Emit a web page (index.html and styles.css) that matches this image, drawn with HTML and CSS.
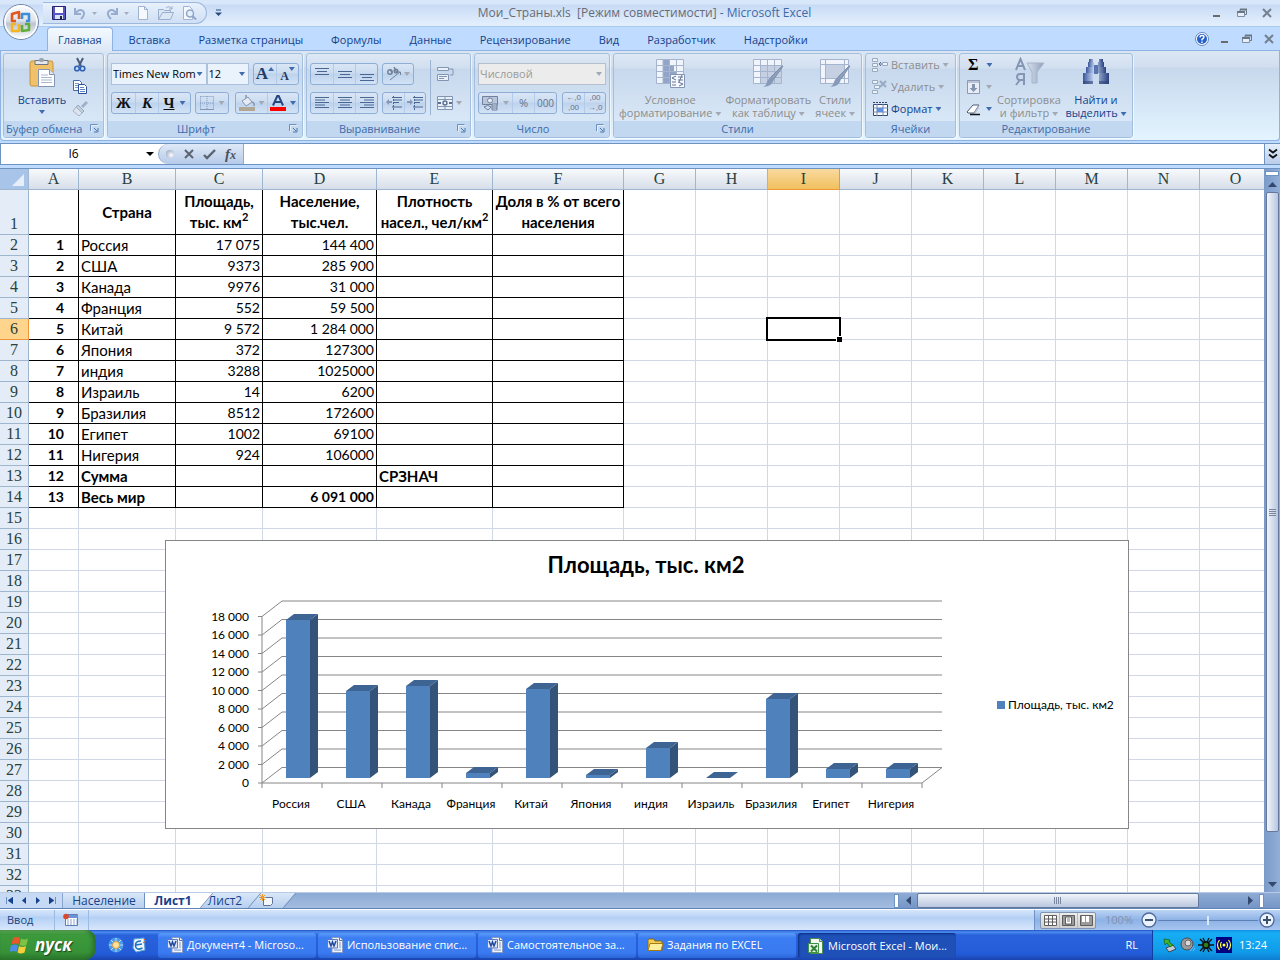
FILE: index.html
```
<!DOCTYPE html>
<html lang="ru">
<head>
  <meta charset="UTF-8">
  <meta name="viewport" content="width=device-width, initial-scale=1.0">
  <title>Мои_Страны.xls - Microsoft Excel</title>
  <link rel="stylesheet" href="styles.css">
</head>
<body>
  <!-- shared icons -->
  <svg class="defs" width="0" height="0" aria-hidden="true">
    <defs>
      <linearGradient id="orbFill" x1="0" y1="0" x2="0" y2="1"><stop offset="0" stop-color="#fdfdfe"/><stop offset=".45" stop-color="#dfe3ea"/><stop offset=".55" stop-color="#bcc5d3"/><stop offset="1" stop-color="#fff"/></linearGradient>
      <linearGradient id="steel" x1="0" y1="0" x2="1" y2="0"><stop offset="0" stop-color="#3a569a"/><stop offset=".4" stop-color="#c3d4f2"/><stop offset="1" stop-color="#2b4280"/></linearGradient>
      <linearGradient id="funnel" x1="0" y1="0" x2="1" y2="0"><stop offset="0" stop-color="#d8e1ef"/><stop offset="1" stop-color="#8f9fbb"/></linearGradient>
    </defs>
    <symbol id="i-launch" viewBox="0 0 9 9"><path d="M.5 7V.5h7" fill="none" stroke="#6d8fbb"/><path d="M4 4l3 3M8 4v4H4" fill="none" stroke="#4f76ab"/><path d="M1.500 8V1.500h7" fill="none" stroke="#fff" opacity=".6"/></symbol>
    <symbol id="i-word" viewBox="0 0 16 16"><path d="M5 .5h8l2.500 2.500v12.500h-10.500z" fill="#eef3fb" stroke="#8b9cc0"/><path d="M12.500.5v3h3" fill="#fff" stroke="#5a6f9e"/><path d="M12 6h2M12 8h2M12 10h2M7 13h7" stroke="#7a93c4"/><path d="M.5 2.500h10v8.500H.5z" fill="#dfe8f8" stroke="#5b7cc4"/><path d="M2 4l2 5 1.500-4L7 9l2-5" fill="none" stroke="#21489c" stroke-width="1.500"/></symbol>
    <symbol id="i-folder" viewBox="0 0 16 16"><path d="M1 3.500q0-1.500 1.500-1.500h4l1.500 2h6q1 0 1 1v8.500h-14z" fill="#f4cf52" stroke="#8d6a10"/><path d="M1 13.500l2-7h13l-2 7z" fill="#ffef9c" stroke="#a37c18"/></symbol>
    <symbol id="i-excel" viewBox="0 0 16 16"><path d="M2.500.5h9l3 3v12h-12z" fill="#f3faf3" stroke="#4c8d50"/><path d="M11.500.5v3h3" fill="#cfe6cf" stroke="#4c8d50"/><path d="M.5 5.500h10v9H.5z" fill="#e6f4e6" stroke="#3c9444"/><path d="M3 7.500l6 6M9 7.500l-6 6" stroke="#2b8035" stroke-width="2"/></symbol>
    <symbol id="i-min" viewBox="0 0 12 12"><path d="M2 9h7" stroke="#6b6b6b" stroke-width="2"/></symbol>
    <symbol id="i-restore" viewBox="0 0 12 12"><path d="M4 4V2.500h6.500v5H9" fill="none" stroke="#6b7684"/><path d="M4 2.500h7" stroke="#6b7684" stroke-width="2"/><path d="M1.500 4.500h7v5h-7z" fill="#e6f0fb" stroke="#7d8ea6"/><path d="M1 5h8" stroke="#6b7684" stroke-width="2"/></symbol>
    <symbol id="i-close" viewBox="0 0 12 12"><path d="M2 2l8 8M10 2l-8 8" stroke="#74808f" stroke-width="2"/></symbol>
  </svg>

  <header class="titlebar">
    <button class="orb" aria-label="Office">
      <svg width="38" height="38" viewBox="0 0 38 38"><circle cx="19" cy="19" r="17.500" fill="url(#orbFill)" stroke="#6f86a8"/><circle cx="19" cy="19" r="16" fill="none" stroke="#fff" stroke-width="1.500"/>
        <g fill="none" stroke-width="2.600" stroke-linejoin="round"><path d="M17 16V9l-7 2v7h4" stroke="#e2571c"/><path d="M20 16v-5h7v7h-3" stroke="#3d8ed8"/><path d="M17 21v7h-7v-7h4" stroke="#f4b51e"/><path d="M20 22v6l7-1v-6h-4" stroke="#5fae3c"/></g></svg>
    </button>
    <div class="qat">
      <button aria-label="Сохранить"><svg width="16" height="16"><path d="M1.500 1.500h13v13h-13z" fill="#5a55c4" stroke="#26226e"/><path d="M4 2h8v6H4z" fill="#fff"/><path d="M4 10h8v4H4z" fill="#d6e2f5"/><path d="M9 11h2v3H9z" fill="#222"/></svg></button>
      <button class="undo" aria-label="Отменить"><svg width="24" height="16"><path d="M2 3v6h6M2 9q4-6 8-3 3 3-2 8" fill="none" stroke="#96add0" stroke-width="2"/><path d="M19 7h5l-2.500 3z" fill="#a3adba"/></svg></button>
      <button class="undo" aria-label="Вернуть"><svg width="24" height="16"><path d="M12 3v6H6M12 9Q8 3 4 6q-3 3 2 8" fill="none" stroke="#96add0" stroke-width="2"/><path d="M19 7h5l-2.500 3z" fill="#a3adba"/></svg></button>
      <button aria-label="Создать"><svg width="16" height="16"><path d="M3.500 1.500h6l3 3v10h-9z" fill="#f5f9fe" stroke="#a0b3d0"/><path d="M9.500 1.500v3h3" fill="none" stroke="#a0b3d0"/></svg></button>
      <button class="open" aria-label="Открыть"><svg width="18" height="16"><path d="M1.500 14.500v-10h5l1 1h6v2M1.500 14.500l4-7h11l-3 7z" fill="#dbe6f4" stroke="#9aafce"/><path d="M9 3q3-3 6 1M15 1v3h-3" fill="none" stroke="#9aafce"/></svg></button>
      <button class="preview" aria-label="Просмотр"><svg width="16" height="16"><path d="M2.500 1.500h6l3 3v10h-9z" fill="#f5f9fe" stroke="#a0b3d0"/><circle cx="9" cy="8.500" r="3.500" fill="#e5effb" stroke="#8fa5c8" stroke-width="1.500"/><path d="M11.500 11l3.500 3.500" stroke="#8fa5c8" stroke-width="2"/></svg></button>
    </div>
    <button class="qat-more" aria-label="Настройка панели"><svg width="7" height="8"><path d="M1 1h5" stroke="#2a4a80"/><path d="M0 3.500h7L3.500 7z" fill="#2a4a80"/></svg></button>
    <h1><span>Мои_Страны.xls&nbsp; [Режим совместимости]</span> - Microsoft Excel</h1>
    <div class="win-buttons">
      <button aria-label="Свернуть"><svg width="12" height="12"><use href="#i-min"/></svg></button>
      <button aria-label="Восстановить"><svg width="12" height="12"><use href="#i-restore"/></svg></button>
      <button aria-label="Закрыть"><svg width="12" height="12"><use href="#i-close"/></svg></button>
    </div>
  </header>

  <nav class="tabs">
    <a href="#" class="active">Главная</a>
    <a href="#">Вставка</a>
    <a href="#">Разметка страницы</a>
    <a href="#">Формулы</a>
    <a href="#">Данные</a>
    <a href="#">Рецензирование</a>
    <a href="#">Вид</a>
    <a href="#">Разработчик</a>
    <a href="#">Надстройки</a>
    <div class="doc-buttons">
      <button aria-label="Справка"><svg width="14" height="14"><circle cx="7" cy="7" r="6.500" fill="#fff" stroke="#6485bb"/><circle cx="7" cy="7" r="5" fill="#2360c8"/><path d="M5 5.500q0-2 2-2t2 1.500q0 1-2 2.300V8.500M7 9.500v1.500" fill="none" stroke="#fff" stroke-width="1.400"/></svg></button>
      <button aria-label="Свернуть окно"><svg width="12" height="12"><use href="#i-min"/></svg></button>
      <button aria-label="Восстановить окно"><svg width="12" height="12"><use href="#i-restore"/></svg></button>
      <button aria-label="Закрыть окно"><svg width="12" height="12"><use href="#i-close"/></svg></button>
    </div>
  </nav>

  <div class="ribbon">
    <section class="group g-clipboard">
      <div class="group-body">
        <button class="big">
          <svg width="32" height="32"><rect x="4" y="4" width="23" height="25" rx="2" fill="#f0c169" stroke="#c8923c"/><path d="M9 3.500h13v4H9z" fill="#e4e7ec" stroke="#6e7683"/><rect x="13" y="1" width="5" height="4" rx="2" fill="#9aa2ad"/><path d="M12.500 12.500h11l5 5v12h-16z" fill="#fff" stroke="#8294b5"/><path d="M23.500 12.500v5h5" fill="#dce6f6" stroke="#8294b5"/><path d="M15 18h7M15 20.500h11M15 23h11M15 25.500h11" stroke="#a9b8d3"/></svg>
          <span>Вставить</span><i class="arrow"></i>
        </button>
        <div class="stack">
          <button aria-label="Вырезать"><svg width="16" height="16"><path d="M5 1l4 8M11 1L7 9" stroke="#4b5d7c" stroke-width="2"/><circle cx="5" cy="11.500" r="2.300" fill="none" stroke="#2d62b5" stroke-width="1.600"/><circle cx="10.500" cy="11.500" r="2.300" fill="none" stroke="#2d62b5" stroke-width="1.600"/></svg></button>
          <button aria-label="Копировать"><svg width="16" height="16"><path d="M1.500 1.500h6l2 2v8h-8z" fill="#fff" stroke="#4768a8"/><path d="M3 4.500h4M3 6.500h4M3 8.500h4" stroke="#7c9bd0"/><path d="M6.500 5.500h6l2 2v7h-8z" fill="#fff" stroke="#2c4f98"/><path d="M8 8.500h4M8 10.500h5M8 12.500h5" stroke="#5c82c4"/></svg></button>
          <button disabled aria-label="Формат по образцу"><svg width="16" height="16"><path d="M15 1l-5 5" stroke="#9fb0c8" stroke-width="3"/><path d="M6 4l6 6-2 2-6-6z" fill="#c3cddc" stroke="#98a8c0"/><path d="M4 6l6 6-3 3-6-5z" fill="#dde4ee" stroke="#a5b3c9"/></svg></button>
        </div>
      </div>
      <h2>Буфер обмена<svg class="launch" width="9" height="9"><use href="#i-launch"/></svg></h2>
    </section>

    <section class="group g-font">
      <div class="group-body rows">
        <div class="row">
          <label class="combo combo-font"><select aria-label="Шрифт"><option>Times New Rom</option></select><i class="arrow"></i></label>
          <label class="combo combo-size"><select aria-label="Размер"><option>12</option></select><i class="arrow"></i></label>
          <div class="set push">
            <button class="glyph" aria-label="Увеличить размер"><b class="a-big">A</b><i class="arrow up"></i></button>
            <button class="glyph" aria-label="Уменьшить размер"><b class="a-small">A</b><i class="arrow top"></i></button>
          </div>
        </div>
        <div class="row">
          <div class="set"><button class="glyph serif">Ж</button><button class="glyph serif italic">К</button><button class="glyph serif wide"><u>Ч</u><i class="arrow"></i></button></div>
          <div class="set"><button class="glyph wide" disabled aria-label="Границы"><svg width="14" height="14"><path d="M.5.5h13v13M.5.5v13M7 0v14M0 7h14" fill="none" stroke="#7e96bb" stroke-dasharray="1 1"/><path d="M0 13.500h14" stroke="#7e96bb"/></svg><i class="arrow off"></i></button></div>
          <div class="set push">
            <button class="glyph wide2" disabled aria-label="Заливка"><svg width="17" height="16"><path d="M3 6l6-4 4 5-6 4z" fill="#e6ebf3" stroke="#8797b1"/><path d="M7 3V0M13 7q3 1 2 4" fill="none" stroke="#8797b1" stroke-width="1.500"/><path d="M0 12h16v4H0z" fill="#b0a795"/></svg><i class="arrow off"></i></button>
            <button class="glyph wide2" aria-label="Цвет шрифта"><svg width="17" height="16"><path d="M3 10.500L7.500.5h1l4.500 10M5 7h6" fill="none" stroke="#25467f" stroke-width="2"/><path d="M0 12h16v4H0z" fill="#f00"/></svg><i class="arrow"></i></button>
          </div>
        </div>
      </div>
      <h2>Шрифт<svg class="launch" width="9" height="9"><use href="#i-launch"/></svg></h2>
    </section>

    <section class="group g-align">
      <div class="group-body">
        <div class="rows">
          <div class="row">
            <div class="set">
              <button class="glyph" aria-label="По верхнему краю"><svg width="14" height="14"><path d="M0 1.500h14M2 4.500h10M0 7.500h14" stroke="#4a6792"/></svg></button>
              <button class="glyph" aria-label="По середине"><svg width="14" height="14"><path d="M0 4.500h14M2 7.500h10M0 10.500h14" stroke="#4a6792"/></svg></button>
              <button class="glyph" aria-label="По нижнему краю"><svg width="14" height="14"><path d="M0 7.500h14M2 10.500h10M0 13.500h14" stroke="#4a6792"/></svg></button>
            </div>
            <div class="set"><button class="glyph angle" disabled aria-label="Ориентация"><svg width="16" height="16"><circle cx="4" cy="6" r="2.200" fill="none" stroke="#73829b" stroke-width="1.500"/><path d="M6 7L4 3M8 1l3 6" stroke="#73829b" stroke-width="1.500"/><circle cx="10" cy="5" r="1.800" fill="none" stroke="#73829b" stroke-width="1.500"/><path d="M4 14L14 6M11 6h3.500v3" fill="none" stroke="#73829b"/></svg><i class="arrow off"></i></button></div>
          </div>
          <div class="row">
            <div class="set">
              <button class="glyph" aria-label="По левому краю"><svg width="14" height="12"><path d="M0 .5h14M0 3h10M0 5.500h14M0 8h10M0 10.500h14" stroke="#4a6792"/></svg></button>
              <button class="glyph" aria-label="По центру"><svg width="14" height="12"><path d="M0 .5h14M2 3h10M0 5.500h14M2 8h10M0 10.500h14" stroke="#4a6792"/></svg></button>
              <button class="glyph" aria-label="По правому краю"><svg width="14" height="12"><path d="M0 .5h14M4 3h10M0 5.500h14M4 8h10M0 10.500h14" stroke="#4a6792"/></svg></button>
            </div>
            <div class="set">
              <button class="glyph narrow" aria-label="Уменьшить отступ"><svg width="16" height="14"><path d="M6 1.500h10M8 4h8M8 6.500h5M6 11h10" stroke="#4a6792"/><path d="M7.500 0v14" stroke="#4a6792" stroke-dasharray="2 1"/><path d="M0 6l3-3v2h3v2H3v2z" fill="#8597b5"/></svg></button>
              <button class="glyph narrow" aria-label="Увеличить отступ"><svg width="16" height="14"><path d="M6 1.500h10M8 4h8M8 6.500h5M6 11h10" stroke="#4a6792"/><path d="M7.500 0v14" stroke="#4a6792" stroke-dasharray="2 1"/><path d="M6 6L3 3v2H0v2h3v2z" fill="#8597b5"/></svg></button>
            </div>
          </div>
        </div>
        <div class="rows wrap-col">
          <button class="plain" disabled aria-label="Перенос текста"><svg width="18" height="16"><path d="M.5 1.500h11v3H.5zM.5 8.500h11v6H.5z" fill="#eaf0f8" stroke="#8295b3"/><path d="M12 3h4v6h-3M2 10.500h8M2 12.500h5" fill="none" stroke="#8295b3"/></svg></button>
          <button class="plain" disabled aria-label="Объединить"><svg width="16" height="16"><path d="M.5 1.500h15v13H.5zM0 4.500h16M0 11.500h16M8 1v3M8 12v3" fill="#eaf0f8" stroke="#8295b3"/><path d="M1 8h3M12 8h3" stroke="#5c6f90" stroke-width="2"/><circle cx="8" cy="8" r="2" fill="none" stroke="#5c6f90" stroke-width="1.400"/></svg><i class="arrow off"></i></button>
        </div>
      </div>
      <h2>Выравнивание<svg class="launch" width="9" height="9"><use href="#i-launch"/></svg></h2>
    </section>

    <section class="group g-number">
      <div class="group-body rows">
        <div class="row">
          <label class="combo combo-format"><select disabled aria-label="Числовой формат"><option>Числовой</option></select><i class="arrow off"></i></label>
        </div>
        <div class="row">
          <div class="set">
            <button class="glyph money" disabled aria-label="Финансовый формат"><svg width="17" height="16"><path d="M.5 1.500h15v8H.5z" fill="#b9c5d8" stroke="#6f819f"/><circle cx="8" cy="5.500" r="2.500" fill="#e5ebf4" stroke="#6f819f"/><path d="M2 12q4-3 7 0l-3 3zM10 9h5v6h-5zM10 11h5M10 13h5" fill="#d6deea" stroke="#6f819f"/></svg><i class="arrow off"></i></button><button class="glyph dim" disabled>%</button><button class="glyph dim tight" disabled>000</button>
          </div>
          <div class="set push">
            <button class="glyph dim tiny" disabled><span>←,0</span><span>,00</span></button><button class="glyph dim tiny" disabled><span>,00</span><span>→,0</span></button>
          </div>
        </div>
      </div>
      <h2>Число<svg class="launch" width="9" height="9"><use href="#i-launch"/></svg></h2>
    </section>

    <section class="group g-styles">
      <div class="group-body">
        <button class="big" disabled>
          <svg width="32" height="32"><path d="M2.500 2.500h27v24h-27z" fill="#f1f5fb" stroke="#a6b5ce"/><path d="M9 3h6v23H9zM15 9h5v6h-5zM15 15h7v6h-7z" fill="#93a5c6"/><path d="M2 8.500h28M2 14.500h28M2 20.500h28M9 2v25M15.500 2v25M22.500 2v25" stroke="#a6b5ce"/><path d="M16.500 17.500h14v13h-14z" fill="#f6f9fd" stroke="#8495b3"/><path d="M22 19l-4 2 4 2M18 25h4M18 28h4M24 20h5M24 23h5M28 18l-3 7M24 25l5 2-4 2" fill="none" stroke="#64759a"/></svg>
          <span>Условное<br>форматирование <i class="arrow off"></i></span>
        </button>
        <button class="big" disabled>
          <svg width="32" height="32"><path d="M1.500 2.500h28v24h-28z" fill="#f1f5fb" stroke="#a6b5ce"/><path d="M9 9h20v17H9z" fill="#c5d0e2"/><path d="M1 8.500h29M1 14.500h29M1 20.500h29M8.500 2v25M15.500 2v25M22.500 2v25" stroke="#a6b5ce"/><path d="M31 9l-9 13-3-2L30 9z" fill="#8fa0bd" stroke="#7d8eac"/><path d="M22 22q-1 7-11 8 3-1 4-5 2-5 5-5z" fill="#8799b9"/></svg>
          <span>Форматировать<br>как таблицу <i class="arrow off"></i></span>
        </button>
        <button class="big" disabled>
          <svg width="32" height="32"><path d="M1.500 2.500h28v24h-28z" fill="#f1f5fb" stroke="#a6b5ce"/><path d="M6 8h19v13H6z" fill="#c5d0e2"/><path d="M1 7.500h29M1 21.500h29M6.500 2v25M25.500 2v25" stroke="#a6b5ce"/><path d="M31 9l-9 13-3-2L30 9z" fill="#8fa0bd" stroke="#7d8eac"/><path d="M22 22q-1 7-11 8 3-1 4-5 2-5 5-5z" fill="#8799b9"/></svg>
          <span>Стили<br>ячеек <i class="arrow off"></i></span>
        </button>
      </div>
      <h2>Стили</h2>
    </section>

    <section class="group g-cells">
      <div class="group-body stack">
        <button disabled><svg width="16" height="16"><path d="M.5 1.500h5v3h-5zM.5 6.500h5v3h-5zM.5 11.500h5v3h-5zM10.500 5.500h5v3h-5z" fill="#eef3fa" stroke="#98a9c4"/><path d="M7 7h3M9 5L7 7l2 2" fill="none" stroke="#5d7297"/></svg>Вставить <i class="arrow off"></i></button>
        <button disabled><svg width="16" height="16"><path d="M.5 1.500h5v3h-5zM2.500 6.500h5v3h-5zM.5 11.500h5v3h-5z" fill="#eef3fa" stroke="#98a9c4"/><path d="M8 2l6 6M14 2L8 8" stroke="#98a9c4" stroke-width="2"/></svg>Удалить <i class="arrow off"></i></button>
        <button><svg width="16" height="16"><path d="M1.500 3.500h14v11h-14z" fill="#fff" stroke="#32496f"/><path d="M1 7h15M1 11h15M5 3v12M11 3v12" stroke="#6f88b2"/><path d="M5 7h6v4H5z" fill="#5d8ee0"/><path d="M1 1.500h14" stroke="#32496f" stroke-dasharray="2 1"/></svg>Формат <i class="arrow"></i></button>
      </div>
      <h2>Ячейки</h2>
    </section>

    <section class="group g-edit">
      <div class="group-body">
        <div class="stack">
          <button class="sum">Σ <i class="arrow"></i></button>
          <button disabled aria-label="Заполнить"><svg width="16" height="16"><path d="M1.500 1.500h12v13h-12z" fill="#e9eef6" stroke="#8999b4"/><path d="M1 3h13" stroke="#8999b4"/><path d="M6 5h3v4h2.500l-4 4-4-4H6z" fill="#8494b0"/></svg><i class="arrow off"></i></button>
          <button aria-label="Очистить"><svg width="16" height="16"><path d="M1 11l6-7h6l-5 8H2z" fill="#fff" stroke="#4c5b74"/><path d="M8 12l5-8v3l-4 6z" fill="#b7bfd0"/><path d="M4 13.500h10" stroke="#111" stroke-width="1.500"/></svg><i class="arrow"></i></button>
        </div>
        <button class="big sort" disabled>
          <svg width="32" height="32"><path d="M14 6h17l-7 9v11h-5V15z" fill="url(#funnel)" stroke="#a7b4ca"/><path d="M3 13L7.500 2 12 13M5 9h5" fill="none" stroke="#8596b5" stroke-width="2"/><path d="M11 28V17H7q-3 0-3 3t3 3h4M7 23l-4 5" fill="none" stroke="#8596b5" stroke-width="2"/></svg>
          <span>Сортировка<br>и фильтр <i class="arrow off"></i></span>
        </button>
        <button class="big find">
          <svg width="32" height="32"><path d="M9 2h4v3H9zM19 2h4v3h-4z" fill="url(#steel)"/><path d="M8 5h6v5H8zM18 5h6v5h-6z" fill="url(#steel)"/><path d="M6 10h8v6H6zM18 10h8v6h-8z" fill="url(#steel)"/><path d="M14 8h4v9h-4z" fill="#5a75ad"/><path d="M3 16h10v11H3zM19 16h10v11H19z" fill="url(#steel)"/><path d="M3 24h10v3H3zM19 24h10v3H19z" fill="#2b4278" opacity=".6"/></svg>
          <span>Найти и<br>выделить <i class="arrow"></i></span>
        </button>
      </div>
      <h2>Редактирование</h2>
    </section>
  </div>

  <div class="formula-bar">
    <label class="name-box"><input type="text" value="I6" aria-label="Имя ячейки"><i class="arrow black"></i></label>
    <div class="fx">
      <i class="knob"></i>
      <button aria-label="Отмена"><svg width="12" height="12"><path d="M2 2l8 8M10 2l-8 8" stroke="#5b6370" stroke-width="2"/></svg></button>
      <button aria-label="Ввод"><svg width="14" height="12"><path d="M1 7l3 3 8-8" fill="none" stroke="#5b6370" stroke-width="2.400"/></svg></button>
      <button class="fn" aria-label="Вставить функцию">f<small>x</small></button>
    </div>
    <input class="formula" type="text" aria-label="Формула">
    <button class="expand" aria-label="Развернуть"><svg width="10" height="12"><path d="M1 1.500l4 3 4-3M1 6.500l4 3 4-3" fill="none" stroke="#111" stroke-width="1.800"/></svg></button>
  </div>

  <main class="workspace">
    <div class="sheet">
      <table id="grid"></table>
      <svg class="chart" id="chart" width="964" height="289" role="img" aria-label="Площадь, тыс. км2"></svg>
    </div>
    <div class="vscroll">
      <i class="split"></i>
      <button aria-label="Вверх"><svg width="9" height="5"><path d="M0 5h9L4.500 0z" fill="#33486f"/></svg></button>
      <div class="thumb"><i></i></div>
      <button aria-label="Вниз"><svg width="9" height="5"><path d="M0 0h9L4.500 5z" fill="#33486f"/></svg></button>
    </div>
  </main>

  <div class="sheet-bar">
    <div class="sheet-nav">
      <button aria-label="Первый"><svg width="7" height="7"><path d="M.5 0v7M7 0v7L2 3.500z" fill="#15428b" stroke="#15428b" stroke-width=".5"/></svg></button>
      <button aria-label="Предыдущий"><svg width="7" height="7"><path d="M6 0v7L2 3.500z" fill="#15428b"/></svg></button>
      <button aria-label="Следующий"><svg width="7" height="7"><path d="M1 0v7l4-3.500z" fill="#15428b"/></svg></button>
      <button aria-label="Последний"><svg width="7" height="7"><path d="M6.500 0v7M0 0v7l5-3.500z" fill="#15428b" stroke="#15428b" stroke-width=".5"/></svg></button>
    </div>
    <button class="sheet-tab t1"><span>Население</span></button>
    <button class="sheet-tab t2 current"><span>Лист1</span></button>
    <button class="sheet-tab t3"><span>Лист2</span></button>
    <button class="sheet-tab t4" aria-label="Вставить лист"><svg width="16" height="13"><path d="M4.500 3.500h9v6l-2 2h-7z" fill="#f3f7fd" stroke="#5f7394"/><path d="M3.500 0v7M0 3.500h7M1 1l5 5M6 1L1 6" stroke="#e8982c"/></svg></button>
    <div class="hscroll">
      <i class="split"></i>
      <button aria-label="Влево"><svg width="5" height="9"><path d="M5 0v9L0 4.500z" fill="#33486f"/></svg></button>
      <div class="thumb"><i></i></div>
      <div class="gap"></div>
      <button aria-label="Вправо"><svg width="5" height="9"><path d="M0 0v9l5-4.500z" fill="#33486f"/></svg></button>
      <i class="split"></i>
    </div>
  </div>

  <div class="status">
    <span class="mode">Ввод</span>
    <span class="macro"><svg width="16" height="14"><path d="M2.500 1.500h12v11h-12z" fill="#fff" stroke="#5d7db5"/><path d="M3 2h12v3H3z" fill="#6a93d8"/><path d="M4 7h10M4 9h10M4 11h10" stroke="#8aa2c8" stroke-dasharray="2 1"/><circle cx="3" cy="3.500" r="2.800" fill="#d8472e"/></svg></span>
    <div class="view-zone">
      <div class="views">
        <button aria-label="Обычный"><svg width="13" height="11"><path d="M.5.5h12v10H.5zM0 4h13M0 7h13M4.500 0v11M8.500 0v11" fill="#fff" stroke="#5d5d5d"/></svg></button>
        <button aria-label="Разметка"><svg width="13" height="11"><path d="M.5.5h12v10H.5z" fill="#9b9b9b" stroke="#5d5d5d"/><path d="M3.500 2h6v7h-6z" fill="#fff" stroke="#5d5d5d"/><path d="M5 4h3M5 6h3" stroke="#777"/></svg></button>
        <button aria-label="Страничный"><svg width="13" height="11"><path d="M.5.5h12v10H.5z" fill="#9b9b9b" stroke="#5d5d5d"/><path d="M2 1h3v6H2zM6 1h3v6H6z" fill="#fff"/></svg></button>
      </div>
      <span class="percent">100%</span>
      <button class="zoom" aria-label="Уменьшить"><svg width="16" height="16"><circle cx="8" cy="8" r="7" fill="#eaf2fd" stroke="#4d6a99" stroke-width="1.300"/><path d="M4 8h8" stroke="#3c5070" stroke-width="2"/></svg></button>
      <input class="slider" type="range" value="50" disabled aria-label="Масштаб">
      <button class="zoom" aria-label="Увеличить"><svg width="16" height="16"><circle cx="8" cy="8" r="7" fill="#eaf2fd" stroke="#4d6a99" stroke-width="1.300"/><path d="M4 8h8M8 4v8" stroke="#3c5070" stroke-width="2"/></svg></button>
    </div>
  </div>

  <footer class="taskbar">
    <button class="start">
      <svg width="20" height="18"><path d="M3 2q4-2 7 0L8.500 8.500q-3-2-7 0z" fill="#e8562a"/><path d="M11 2.500q3 2 7 0L16.500 9q-4 2-7 0z" fill="#7cc243"/><path d="M1 9.500q4-2 7 0L6.500 16q-3-2-7 0z" fill="#4b8de8"/><path d="M9 10q3 2 7 0l-1.500 6.500q-4 2-7 0z" fill="#f7cf3b"/></svg>
      пуск
    </button>
    <div class="quick">
      <button aria-label="Проигрыватель"><svg width="16" height="16"><circle cx="8" cy="8" r="7.500" fill="#4c9be8"/><path d="M8 1v14M1 8h14M3 3l10 10M13 3L3 13" stroke="#b5e0ff"/><circle cx="8" cy="8" r="3.500" fill="#f8e2a0" stroke="#e09a3a"/></svg></button>
      <button aria-label="Почта"><svg width="16" height="16"><path d="M3 2l10-1 1 12-9 2-3-4z" fill="#eef6fc" stroke="#5aa2d8"/><path d="M10 4Q4 4 4.500 9t7 2M5 8l6-1" fill="none" stroke="#1b74c0" stroke-width="1.600"/><path d="M12 6l3-2-2-2" fill="none" stroke="#e05a20"/></svg></button>
    </div>
    <button class="task"><svg width="16" height="16"><use href="#i-word"/></svg>Документ4 - Microso...</button>
    <button class="task"><svg width="16" height="16"><use href="#i-word"/></svg>Использование спис...</button>
    <button class="task"><svg width="16" height="16"><use href="#i-word"/></svg>Самостоятельное за...</button>
    <button class="task"><svg width="16" height="16"><use href="#i-folder"/></svg>Задания по EXCEL</button>
    <button class="task pressed"><svg width="16" height="16"><use href="#i-excel"/></svg>Microsoft Excel - Мои...</button>
    <span class="lang">RL</span>
    <div class="tray">
      <svg width="16" height="16"><path d="M4 11l7-3 3 4-7 3z" fill="#c3ccd6" stroke="#3a4450"/><path d="M2 2l6 1-1 2 4 3-3 2-3-4-2 2z" fill="#3fb62c" stroke="#14600e" stroke-width=".7"/></svg>
      <svg width="16" height="16"><circle cx="7" cy="7" r="6" fill="#9a9a9a" stroke="#4c4c4c"/><circle cx="8" cy="6" r="3" fill="#d9d9d9" stroke="#666"/><path d="M10 14l4-5M13 14l2-3" stroke="#8ab4ff"/></svg>
      <svg width="16" height="16"><path d="M2 2l4 4M14 2l-4 4M0 8h16M2 14l4-4M14 14l-4-4M5 1l2 4M11 1L9 5M5 15l2-4M11 15l-2-4" stroke="#111" stroke-width="1.300"/><circle cx="8" cy="8" r="4" fill="#111"/><circle cx="8" cy="8" r="2.300" fill="#2f7d1c"/></svg>
      <svg width="16" height="16"><path d="M0 0h16v16H0z" fill="#000080"/><circle cx="8" cy="8" r="1.500" fill="#ff3"/><path d="M5.500 5Q3.500 8 5.500 11M10.500 5q2 3 0 6M3.500 3q-4 5 0 10M12.500 3q4 5 0 10" fill="none" stroke="#ff3" stroke-width="1.200"/></svg>
      <time>13:24</time>
    </div>
  </footer>

  <script src="script.js"></script>
</body>
</html>
```

FILE: styles.css
```
* { box-sizing: border-box; }
body { margin: 0; height: 100vh; display: flex; flex-direction: column; overflow: hidden; background: #bfdbff; font: 11px/14px "Open Sans", "Noto Sans", sans-serif; color: #15428b; }
button, select, input { font: inherit; color: inherit; margin: 0; padding: 0; border: 0; background: none; border-radius: 0; }
h1, h2 { margin: 0; font-size: 11px; font-weight: normal; }
svg { display: block; flex: none; }
.defs { position: absolute; }

.arrow { display: inline-block; width: 6px; height: 4px; background: #3f6cae; clip-path: polygon(0 0, 100% 0, 50% 100%); vertical-align: middle; flex: none; }
.arrow.off { background: #a3a9b3; }
.arrow.black { width: 8px; height: 4px; background: #000; }

/* title */
.titlebar { display: flex; align-items: center; height: 27px; padding-right: 7px; border-bottom: 1px solid #a9cbf0; background: linear-gradient(#d8e7fa 0, #d8e7fa 4px, #c8dbf5 5px, #e3effd 25px); position: relative; z-index: 1; }
.orb { align-self: flex-start; width: 38px; height: 38px; margin: 3px 3px 0 2px; z-index: 2; }
.qat { display: flex; align-items: center; height: 22px; padding: 0 9px 0 8px; border: 1px solid #9fb9dc; border-left: 0; border-radius: 0 11px 11px 0; background: linear-gradient(#e8f1fc, #cfdff4); }
.qat button + button { margin-left: 6px; }
.qat .undo + .undo { margin-left: 8px; }
.qat-more { margin-left: 8px; }
.titlebar h1 { flex: 1; text-align: center; font-size: 12px; color: #3e6aaa; padding-right: 144px; white-space: nowrap; }
.titlebar h1 span { color: #696b75; }
.win-buttons { display: flex; gap: 13px; }

/* ribbon tabs */
.tabs { display: flex; align-items: flex-end; height: 24px; padding-left: 47px; border-bottom: 1px solid #8db2e3; background: #bfdbff; }
.tabs a { height: 23px; padding: 5px 13px 0; border: 1px solid transparent; color: #15428b; text-decoration: none; white-space: nowrap; }
.tabs a.active { padding: 5px 10px 0; margin-right: 2px; height: 24px; margin-bottom: -1px; border-color: #8db2e3; border-bottom: 0; border-radius: 4px 4px 0 0; background: linear-gradient(#f4f9ff, #dde8f6); }
.doc-buttons { display: flex; align-items: center; gap: 10px; margin-left: auto; height: 23px; padding-right: 5px; }

/* ribbon */
.ribbon { display: flex; gap: 3px; padding: 2px 2px; border: 1px solid #8db2e3; border-top: 0; border-radius: 0 0 4px 4px; background: linear-gradient(#dbe6f4 0, #d2deef 16px, #c7d8ed 17px, #e3f4ff 88px); flex: none; }
.group { display: flex; flex-direction: column; border: 1px solid #a3bfdd; border-radius: 3px; background: linear-gradient(#dee8f5 0, #d1dff0 14px, #c7d8ed 15px, #d9e8f7 68px); box-shadow: 1px 1px 0 rgba(255, 255, 255, .6); }
.group h2 { position: relative; height: 16px; background: #c1d8f0; text-align: center; line-height: 16px; color: #3e6aaa; white-space: nowrap; border-radius: 0 0 3px 3px; }
.launch { position: absolute; right: 4px; top: 3px; }
.group-body { display: flex; height: 67px; }
.g-clipboard { width: 101px; }
.g-clipboard h2 { text-align: left; padding-left: 2px; }
.g-font { width: 196px; }
.g-align { width: 165px; }
.g-number { width: 136px; }
.g-styles { width: 249px; }
.g-cells { width: 91px; }
.g-edit { width: 174px; }
.g-font h2, .g-align h2, .g-number h2 { padding-right: 18px; }

.big { display: flex; flex-direction: column; align-items: center; padding-top: 3px; line-height: 13px; white-space: nowrap; }
.big svg { margin-bottom: 4px; }
.big > .arrow { margin-top: 4px; }
.big:disabled, .stack button:disabled { color: #8d8d8d; }
.g-clipboard .big { width: 76px; }
.stack { display: flex; flex-direction: column; }
.stack button { display: flex; align-items: center; height: 22px; gap: 3px; white-space: nowrap; }
.g-clipboard .stack { margin-left: -8px; }
.g-cells .stack { padding-left: 6px; }
.g-styles .group-body { padding: 0 6px 0 5px; justify-content: space-between; }
.g-edit .stack { width: 36px; padding-left: 6px; }
.g-edit .stack button { gap: 4px; }
.g-edit .sort { width: 66px; }
.g-edit .find { width: 68px; }
.g-edit .stack .sum { font: bold 16px/16px "Liberation Serif", serif; color: #000; padding-left: 2px; gap: 8px; }

.rows { display: flex; flex-direction: column; gap: 7px; padding: 9px 3px 0; }
.row { display: flex; gap: 4px; height: 22px; }
.set { display: flex; height: 22px; border: 1px solid #8eaed6; border-radius: 3px; background: linear-gradient(#d9e6f6 0, #cbdcf0 9px, #bdd2ec 10px, #d3e3f6 20px); }
.push { margin-left: auto; }
.glyph { display: flex; align-items: center; justify-content: center; gap: 4px; min-width: 22px; }
.glyph + .glyph { border-left: 1px solid #b3cbe8; }
.glyph.serif { font: bold 15px/15px "Liberation Serif", serif; color: #111; min-width: 23px; }
.glyph.italic { font-style: italic; }
.glyph.wide { min-width: 32px; gap: 5px; }
.glyph.wide2 { min-width: 31px; gap: 3px; }
.glyph.angle { min-width: 30px; gap: 2px; }
.glyph.narrow { min-width: 21px; }
.glyph.money { min-width: 33px; }
.glyph.dim { color: #63728d; }
.glyph.tight { font-size: 10px; }
.glyph.tiny { flex-direction: column; gap: 0; font: 8px/10px "Liberation Sans", sans-serif; min-width: 21px; }
.a-big { font: bold 17px/18px "Liberation Serif", serif; color: #223b66; }
.a-small { font: bold 12px/18px "Liberation Serif", serif; color: #223b66; padding-top: 4px; }
.glyph .up, .glyph .top { align-self: flex-start; margin: 3px 0 0 -4px; }
.glyph .up { clip-path: polygon(50% 0, 100% 100%, 0 100%); }
.combo { display: flex; align-items: center; height: 22px; border: 1px solid #abc1de; background: #eaf2fb; padding-right: 3px; color: #000; }
.combo select { flex: 1; min-width: 0; height: 20px; padding-left: 1px; appearance: none; }
.combo-font { width: 97px; }
.combo-size { width: 43px; margin-left: -4px; }
.combo-format { width: 128px; background: #ececec; border-color: #b5bfce; color: #9b9b9b; }
.combo-format select { opacity: 1; }
.wrap-col { gap: 7px; padding: 0 0 0 6px; margin: 6px 0 6px 1px; border-left: 1px solid #9cb4d3; }
.plain { display: flex; align-items: center; gap: 3px; height: 22px; margin-top: 3px; }
.plain + .plain { margin-top: 0; }

/* formula bar */
.formula-bar { display: flex; height: 22px; margin: 2px 0 3px; border: 1px solid #6f93c1; border-width: 1px 0; background: #fff; color: #000; flex: none; }
.name-box { display: flex; align-items: center; width: 158px; padding-right: 4px; border-left: 1px solid #6f93c1; }
.name-box input { flex: 1; min-width: 0; text-align: center; font-size: 12px; }
.fx { display: flex; align-items: center; width: 86px; padding-left: 7px; border: 1px solid #90a9cd; border-width: 0 1px 0 1px; border-radius: 11px 0 0 11px; background: linear-gradient(#dfe9f7, #b6cae8); }
.knob { width: 8px; height: 8px; border-radius: 4px; background: radial-gradient(circle at 65% 65%, #fff, #8497b6); margin-right: 9px; }
.fx button { margin-left: 0; margin-right: 8px; }
.fx .fn { font: italic bold 15px/18px "Liberation Serif", serif; color: #4a5260; margin: 0; }
.fn small { font-size: 12px; }
.formula { flex: 1; min-width: 0; }
.expand { display: flex; align-items: center; justify-content: center; width: 16px; border-left: 1px solid #6f93c1; background: linear-gradient(#e6effb, #b9cdea); }

/* sheet */
.workspace { flex: 1; display: flex; min-height: 0; border-top: 1px solid #6f93c1; }
.sheet { flex: 1; position: relative; overflow: hidden; background: #fff; min-width: 0; }
table { border-collapse: separate; border-spacing: 0; table-layout: fixed; width: 1272px; color: #000; font: 15px/20px "Lato", "Open Sans", sans-serif; }
th, td { padding: 0 2px; height: 21px; border: 1px solid #d0d7e5; border-width: 0 1px 1px 0; white-space: nowrap; }
.col-row { width: 29px; }
.col-a { width: 50px; }
.col-b { width: 97px; }
.col-c { width: 87px; }
.col-d { width: 114px; }
.col-e { width: 116px; }
.col-f { width: 131px; }
.col-rest { width: 72px; }
thead th, tbody th { font: 16px/20px "Liberation Serif", serif; color: #27413e; border-color: #9eb6ce; }
thead th { background: linear-gradient(#f8fafc, #d6dee9); }
tbody th { background: #e4ecf7; vertical-align: bottom; padding: 0; }
thead .corner { background: #a9c4e9; padding: 0; }
.corner i { display: block; width: 12px; height: 12px; margin: 2px 4px 0 auto; background: #e6eefa; clip-path: polygon(100% 0, 100% 100%, 0 100%); }
thead th.hot { background: linear-gradient(#f9d99f, #f1c15f); border-color: #f29536; }
tbody th.hot { background: #ffd58d; border-color: #f29536; }
.data { border-color: #000; }
.head td { height: 45px; padding: 0; text-align: center; line-height: 21px; }
.head sup { font-size: 11px; line-height: 0; vertical-align: 7px; }
td.bold, .head td { font-weight: bold; }
td.num, td.idx { text-align: right; font-size: 14px; }
td.idx { padding-right: 14px; }
td.selected { position: relative; }
td.selected::before { content: ""; position: absolute; inset: -2px; border: 2px solid #000; }
td.selected::after { content: ""; position: absolute; right: -3px; bottom: -3px; width: 5px; height: 5px; background: #000; border: 1px solid #fff; border-width: 1px 0 0 1px; }
.chart { position: absolute; left: 165px; top: 371px; background: #fff; border: 1px solid #868686; font: 12px "Lato", "Open Sans", sans-serif; }
.chart .grid-line { stroke: #868686; fill: none; }
.chart .front { fill: #4f81bd; }
.chart .side { fill: #335379; }
.chart .roof { fill: #3d6493; }
.chart .title { font-size: 22px; font-weight: bold; text-anchor: middle; }
.chart .y-label { text-anchor: end; }
.chart .x-label { text-anchor: middle; }

.thumb { display: flex; align-items: center; justify-content: center; border: 1px solid #66789c; border-radius: 2px; }
.vscroll { display: flex; flex-direction: column; align-items: center; width: 16px; background: linear-gradient(90deg, #7a9ac8, #93afd8); }
.vscroll .split { width: 14px; height: 5px; margin-top: 2px; border: 1px solid #6f93c1; background: #fff; flex: none; }
.vscroll button { display: flex; align-items: center; height: 16px; flex: none; }
.vscroll .thumb { width: 13px; flex: 1; margin-bottom: 44px; background: linear-gradient(90deg, #f2f5fa, #b7c6de); }
.vscroll .thumb i { width: 7px; height: 7px; background: repeating-linear-gradient(#7a869c 0 1px, transparent 1px 2px); }

/* sheet tabs */
.sheet-bar { display: flex; height: 17px; flex: none; overflow: hidden; border-top: 1px solid #b7cbe6; border-bottom: 1px solid #5f84ba; background: linear-gradient(#8dabd4, #a4bce0); }
.sheet-nav { display: flex; align-items: center; justify-content: space-between; width: 63px; padding: 0 6px; background: #c6daf5; border-right: 1px solid #8aa6cf; position: relative; z-index: 5; }
.sheet-tab { position: relative; height: 15px; font-size: 12px; line-height: 15px; color: #15428b; }
.sheet-tab span { position: relative; }
.sheet-tab svg { position: relative; margin-left: 10px; }
.sheet-tab::before { content: ""; position: absolute; top: 0; bottom: 0; left: -20px; right: -6px; background: linear-gradient(#d9e7f9, #b7cfee); border-right: 1px solid #6f8fbf; transform: skewX(-40deg); }
.t1 { width: 82px; z-index: 2; }
.t2 { width: 56px; z-index: 3; }
.t3 { width: 48px; z-index: 1; }
.t4 { width: 35px; z-index: 0; }
.sheet-tab.current { font-weight: bold; }
.sheet-tab.t1::before { transform: none; right: 0; left: 0; }
.sheet-tab.current::before { background: #fff; left: 6px; }
.sheet-tab.current::after { content: ""; position: absolute; top: 0; bottom: 0; left: 0; width: 24px; background: #fff; z-index: -1; }
.hscroll { display: flex; align-items: center; width: 386px; margin-left: auto; background: linear-gradient(#8fabd5, #7596c7); }
.hscroll .split { width: 5px; height: 14px; border: 1px solid #6f93c1; background: #fff; }
.hscroll button { width: 18px; display: flex; justify-content: center; }
.hscroll .thumb { width: 282px; height: 15px; background: linear-gradient(#f0f4fa, #b9c7df); }
.hscroll .thumb i { width: 8px; height: 7px; background: repeating-linear-gradient(90deg, #7a869c 0 1px, transparent 1px 2px); }
.hscroll .gap { flex: 1; }
.hscroll > .split:last-child { margin-right: 16px; }

/* status bar */
.status { display: flex; align-items: center; height: 21px; flex: none; border-top: 1px solid #fff; background: linear-gradient(#d6e5fa 0, #bfd7f7 6px, #b3cff5 7px, #d8e7fb 20px); }
.mode { width: 55px; padding-left: 7px; border-right: 1px solid #9cbbe3; line-height: 20px; color: #1c3f7d; }
.macro { display: flex; align-items: center; width: 34px; height: 20px; padding-left: 8px; border-right: 1px solid #9cbbe3; }
.view-zone { display: flex; align-items: center; margin-left: auto; height: 20px; padding: 0 5px; border-left: 1px solid #6d92c8; background: linear-gradient(#bcd4f5, #8db2e6 10px, #a7c5ef); }
.views { display: flex; height: 17px; border: 1px solid #7f93b3; border-radius: 2px; background: linear-gradient(#eee, #cfcfcf); }
.views button { display: flex; align-items: center; justify-content: center; width: 18px; }
.views button + button { border-left: 1px solid #b9b9b9; }
.percent { width: 45px; text-align: right; padding-right: 8px; color: #8492ab; }
.slider { appearance: none; width: 100px; height: 9px; margin: 0 1px; background: linear-gradient(#dce9fb, #dce9fb) center / 2px 9px no-repeat, linear-gradient(#5f80b2, #5f80b2) center / 100% 1px no-repeat; }
.slider::-webkit-slider-thumb { appearance: none; width: 0; height: 0; }

/* taskbar */
.taskbar { display: flex; align-items: center; height: 30px; flex: none; color: #fff; background: linear-gradient(#1f4fc4 0, #4b8df0 2px, #2a62dc 5px, #245bd8 24px, #1a43ae 30px); }
.start { display: flex; align-items: center; gap: 5px; width: 96px; height: 30px; padding-left: 10px; border-radius: 0 10px 12px 0; background: linear-gradient(#6cb466 0, #3c9a3c 4px, #379237 22px, #2a762b 30px); box-shadow: inset -3px 0 4px #2a6d2b; font: italic bold 17px/20px "Open Sans", sans-serif; color: #fff; text-shadow: 1px 1px 1px #1b441b; }
.quick { display: flex; gap: 7px; width: 62px; padding-left: 12px; }
.task { display: flex; align-items: center; gap: 4px; width: 158px; height: 25px; margin-right: 2px; padding-left: 9px; border-radius: 3px; background: linear-gradient(#5c9af7, #3b7df2 5px, #397af0 20px, #2c66d8); color: #fff; white-space: nowrap; }
.task.pressed { padding: 1px 0 0 10px; background: #1e50b8; box-shadow: inset 1px 1px 2px #0c2f80; }
.lang { margin-left: auto; padding: 0 14px 0 2px; }
.tray { display: flex; align-items: center; gap: 2px; width: 128px; height: 30px; padding-left: 9px; border-left: 1px solid #0c3fa0; background: linear-gradient(#1290e8 0, #17aef5 3px, #109be9 22px, #0e7cd0 30px); }
.tray time { margin-left: 5px; }
```

FILE: script.js
```
const columns = 'ABCDEFGHIJKLMNO'.split('');
const head = ['', 'Страна', 'Площадь,<br>тыс. км<sup>2</sup>', 'Население,<br>тыс.чел.', 'Плотность<br>насел., чел/км<sup>2</sup>', 'Доля в % от всего<br>населения'];
const rows = [
  ['1', 'Россия', '17 075', '144 400'],
  ['2', 'США', '9373', '285 900'],
  ['3', 'Канада', '9976', '31 000'],
  ['4', 'Франция', '552', '59 500'],
  ['5', 'Китай', '9 572', '1 284 000'],
  ['6', 'Япония', '372', '127300'],
  ['7', 'индия', '3288', '1025000'],
  ['8', 'Израиль', '14', '6200'],
  ['9', 'Бразилия', '8512', '172600'],
  ['10', 'Египет', '1002', '69100'],
  ['11', 'Нигерия', '924', '106000'],
  ['12', 'Сумма', '', '', 'СРЗНАЧ'],
  ['13', 'Весь мир', '', '6 091 000'],
];
const ROW_COUNT = 33;

function cell(row, col) {
  const classes = [];
  let text = '';
  if (row <= 14 && col < 6) {
    classes.push('data');
    text = row === 1 ? head[col] : rows[row - 2][col] || '';
    if (row > 1) {
      if (col === 0) classes.push('idx');
      if (col === 2 || col === 3) classes.push('num');
      if (col === 0 || row >= 13) classes.push('bold');
    }
  }
  if (row === 6 && columns[col] === 'I') classes.push('selected');
  return `<td class="${classes.join(' ')}">${text}</td>`;
}

function renderGrid() {
  const widths = ['row', 'a', 'b', 'c', 'd', 'e', 'f'];
  let html = '<colgroup>' + widths.map(w => `<col class="col-${w}">`).join('') + '<col class="col-rest" span="9"></colgroup>';
  html += '<thead><tr><th class="corner"><i></i></th>';
  html += columns.map(c => `<th class="${c === 'I' ? 'hot' : ''}">${c}</th>`).join('') + '</tr></thead><tbody>';
  for (let r = 1; r <= ROW_COUNT; r++) {
    html += `<tr class="${r === 1 ? 'head' : ''}"><th class="${r === 6 ? 'hot' : ''}">${r}</th>`;
    html += columns.map((c, i) => cell(r, i)).join('') + '</tr>';
  }
  document.getElementById('grid').innerHTML = html + '</tbody>';
}

function renderChart() {
  const left = 96, base = 242, step = 18.5, slot = 60, depthX = 20, depthY = 15.5;
  let svg = '<text class="title" x="480" y="32">Площадь, тыс. км2</text>';

  for (let i = 0; i <= 9; i++) {
    const y = base - i * step;
    svg += `<path class="grid-line" d="M${left - 4} ${y}h4l${depthX} ${-depthY}h660"/>`;
    svg += `<text class="y-label" x="83" y="${y + 4}">${i ? i * 2 + ' 000' : 0}</text>`;
  }
  svg += `<path class="grid-line" d="M${left} ${base - 9 * step}V${base}h660l${depthX} ${-depthY}"/>`;

  rows.slice(0, 11).forEach((row, i) => {
    const value = Number(row[2].replace(' ', ''));
    const x = left + i * slot;
    const h = Math.round(value / 2000 * step);
    const bx = x + 24, bottom = base - 5, top = bottom - h;
    svg += `<path class="grid-line" d="M${x} ${base}v5"/>`;
    svg += `<path class="front" d="M${bx} ${bottom}V${top}h24V${bottom}z"/>`;
    svg += `<path class="side" d="M${bx + 24} ${bottom}V${top}l8 -6v${h}z"/>`;
    svg += `<path class="roof" d="M${bx} ${top}l8 -6h24l-8 6z"/>`;
    svg += `<text class="x-label" x="${x + 29}" y="267">${row[1]}</text>`;
  });
  svg += `<path class="grid-line" d="M${left + 660} ${base}v5"/>`;
  svg += '<rect class="front" x="831" y="160" width="8" height="8"/><text x="842" y="168">Площадь, тыс. км2</text>';
  document.getElementById('chart').innerHTML = svg;
}

renderGrid();
renderChart();
```
